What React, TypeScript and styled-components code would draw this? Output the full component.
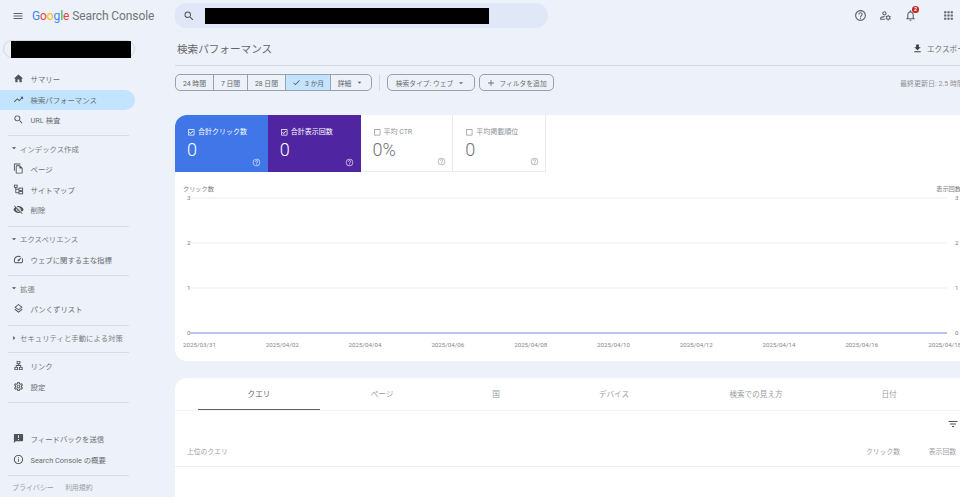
import React from "react";
import styled, { createGlobalStyle } from "styled-components";
import {
  MdAdd,
  MdAnnouncement,
  MdApps,
  MdArrowDropDown,
  MdArrowRight,
  MdCheck,
  MdCheckBoxOutlineBlank,
  MdFileDownload,
  MdFilterList,
  MdHelpOutline,
  MdHome,
  MdInfoOutline,
  MdMenu,
  MdNotificationsNone,
  MdOutlineCheckBox,
  MdOutlineFileCopy,
  MdOutlineLan,
  MdOutlineLayers,
  MdOutlineManageAccounts,
  MdOutlineSettings,
  MdOutlineSpeed,
  MdSearch,
  MdTrendingUp,
  MdVisibilityOff,
} from "react-icons/md";

const FONT = `Roboto, "Noto Sans CJK JP", sans-serif`;

const GlobalStyle = createGlobalStyle`
  html, body {
    margin: 0;
    padding: 0;
    height: 100%;
    overflow: hidden;
    background: #edf1f9;
    font-family: ${FONT};
    color: #5f6368;
  }
`;

const Page = styled.div`
  display: flex;
  width: 960px;
  height: 497px;
  overflow: hidden;
`;

/* sidebar */
const Sidebar = styled.aside`
  width: 175px;
  flex: none;
  display: flex;
  flex-direction: column;
`;

const LogoRow = styled.div`
  height: 32px;
  display: flex;
  align-items: center;
  padding-left: 12px;
  color: #5f6368;
`;

const Logo = styled.div`
  margin-left: 8px;
  font-size: 12px;
  white-space: nowrap;
  letter-spacing: -0.1px;
  color: #70757a;
`;

const Letter = styled.span<{ $c: string }>`
  color: ${(p) => p.$c};
`;

const PropertyPill = styled.div`
  margin: 8px 0 11px 3px;
  width: 132px;
  height: 18px;
  box-sizing: border-box;
  border: 1px solid #d5d8de;
  border-radius: 9px;
  padding-left: 7px;
  display: flex;
  align-items: center;
`;

const Redacted = styled.div<{ $w: number; $h: number }>`
  width: ${(p) => p.$w}px;
  height: ${(p) => p.$h}px;
  background: #000;
  flex: none;
`;

const NavRow = styled.div<{ $active?: boolean }>`
  height: 20.5px;
  width: 135px;
  display: flex;
  align-items: center;
  box-sizing: border-box;
  padding: 0 0 1px 13px;
  gap: 6.5px;
  font-size: 7.4px;
  color: #6a6e73;
  white-space: nowrap;
  border-radius: 0 11px 11px 0;
  background: ${(p) => (p.$active ? "#c2e4ff" : "transparent")};
  svg {
    width: 11px;
    height: 11px;
    flex: none;
    color: #50545a;
  }
`;

const SectionRow = styled.div`
  height: 20px;
  box-sizing: border-box;
  display: flex;
  align-items: center;
  padding: 0 0 2px 8.5px;
  font-size: 7.4px;
  color: #7a7e83;
  white-space: nowrap;
  svg {
    font-size: 10px;
    margin-right: 1.5px;
    color: #50545a;
    flex: none;
  }
`;

const NavDivider = styled.div<{ $before?: number; $after?: number }>`
  height: 1px;
  width: 121px;
  margin: ${(p) => p.$before ?? 4.5}px 0 ${(p) => p.$after ?? 3}px 8px;
  background: #d9dce2;
  flex: none;
`;

const Spacer = styled.div`
  flex: 1;
`;

const LegalRow = styled.div`
  display: flex;
  gap: 11px;
  padding-left: 12px;
  font-size: 7px;
  color: #9a9da2;
  height: 21px;
  align-items: center;
`;

/* main column */
const Main = styled.main`
  width: 785px;
  flex: none;
  overflow: hidden;
`;

const Header = styled.header`
  height: 32px;
  display: flex;
  align-items: flex-start;
`;

const SearchBar = styled.div`
  margin-top: 3px;
  margin-left: -1px;
  width: 374px;
  height: 25px;
  border-radius: 13px;
  background: #e0e8f8;
  display: flex;
  align-items: center;
  padding-left: 9px;
  box-sizing: border-box;
  gap: 10px;
  color: #50545a;
  svg {
    font-size: 12px;
    flex: none;
  }
`;

const HeaderIcons = styled.div`
  margin-left: auto;
  display: flex;
  align-items: center;
  height: 30px;
  color: #5f6368;
`;

const HeaderIcon = styled.div<{ $gap?: number }>`
  position: relative;
  width: 13px;
  height: 13px;
  margin-right: ${(p) => p.$gap ?? 12}px;
  svg {
    width: 13px;
    height: 13px;
    display: block;
  }
`;

const Badge = styled.span`
  position: absolute;
  top: -3px;
  right: -2px;
  width: 7px;
  height: 7px;
  border-radius: 50%;
  background: #c5221f;
  color: #fff;
  font-size: 5.5px;
  line-height: 7px;
  text-align: center;
  font-weight: 700;
`;

const TitleRow = styled.div`
  height: 33px;
  border-bottom: 1px solid #d6d9df;
  display: flex;
  align-items: center;
  justify-content: space-between;
`;

const Title = styled.h1`
  margin: 0 0 0 2px;
  font-size: 10.6px;
  font-weight: 400;
  color: #62666b;
`;

const ExportButton = styled.div`
  display: flex;
  align-items: center;
  gap: 4px;
  width: 48px;
  font-size: 7.6px;
  white-space: nowrap;
  color: #6a6e73;
  svg {
    font-size: 11px;
    flex: none;
    color: #3c4043;
  }
`;

const FilterBar = styled.div`
  height: 17px;
  margin-top: 8px;
  display: flex;
  align-items: center;
`;

const Segments = styled.div`
  display: flex;
  height: 17px;
  box-sizing: border-box;
  border: 1px solid #9aa0a6;
  border-radius: 5px;
  overflow: hidden;
`;

const Segment = styled.div<{ $w: number; $on?: boolean }>`
  width: ${(p) => p.$w}px;
  box-sizing: border-box;
  display: flex;
  align-items: center;
  justify-content: center;
  font-size: 6.8px;
  color: #5f6368;
  white-space: nowrap;
  gap: 4px;
  background: ${(p) => (p.$on ? "#c2e4ff" : "transparent")};
  & + & {
    border-left: 1px solid #9aa0a6;
  }
  svg {
    font-size: 9px;
    flex: none;
  }
`;

const BarDivider = styled.div`
  width: 1px;
  height: 17px;
  background: #d6d9df;
  margin: 0 7px;
`;

const Chip = styled.div<{ $w: number }>`
  width: ${(p) => p.$w}px;
  height: 17px;
  box-sizing: border-box;
  border: 1px solid #9aa0a6;
  border-radius: 5px;
  margin-right: 4px;
  display: flex;
  align-items: center;
  justify-content: center;
  gap: 3px;
  font-size: 6.8px;
  color: #6a6e73;
  white-space: nowrap;
  svg {
    font-size: 10px;
    flex: none;
  }
`;

const Updated = styled.div`
  margin-left: auto;
  width: 60px;
  overflow: hidden;
  font-size: 7px;
  white-space: nowrap;
  color: #8f9297;
`;

const Card = styled.section<{ $top: number }>`
  width: 800px;
  margin-top: ${(p) => p.$top}px;
  background: #fff;
  border-radius: 12px;
  overflow: hidden;
`;

const Metrics = styled.div`
  display: flex;
`;

const Metric = styled.div<{ $bg?: string }>`
  position: relative;
  width: 92.75px;
  height: 57px;
  box-sizing: border-box;
  padding: 12px 0 0 12px;
  background: ${(p) => p.$bg ?? "#fff"};
  color: ${(p) => (p.$bg ? "#fff" : "#8f9297")};
  border-right: ${(p) => (p.$bg ? "none" : "1px solid #e8eaed")};
  border-bottom: ${(p) => (p.$bg ? "none" : "1px solid #e8eaed")};
`;

const MetricLabel = styled.div`
  display: flex;
  align-items: center;
  gap: 2.5px;
  font-size: 7px;
  line-height: 10px;
  white-space: nowrap;
  svg {
    font-size: 8.5px;
    flex: none;
  }
`;

const MetricValue = styled.div<{ $dark: boolean }>`
  font-size: 18px;
  line-height: 22px;
  margin-top: 2px;
  font-weight: 300;
  color: ${(p) => (p.$dark ? "#fff" : "#6f7378")};
`;

const MetricHelp = styled.span`
  position: absolute;
  right: 6.5px;
  bottom: 5.5px;
  font-size: 9px;
  line-height: 0;
  opacity: 0.75;
  color: inherit;
`;

const ChartSvg = styled.svg`
  display: block;
  width: 800px;
  height: 189px;
  font-family: ${FONT};
`;

const Tabs = styled.div`
  display: flex;
  height: 33px;
  box-sizing: border-box;
  padding-left: 23px;
  border-bottom: 1.5px solid #f1f3f4;
`;

const Tab = styled.div<{ $w: number; $on?: boolean }>`
  width: ${(p) => p.$w}px;
  box-sizing: border-box;
  display: flex;
  align-items: center;
  justify-content: center;
  padding-bottom: 1px;
  font-size: 7.6px;
  color: ${(p) => (p.$on ? "#5f6368" : "#9a9da2")};
  border-bottom: ${(p) => (p.$on ? "1.5px solid #5f6368" : "none")};
`;

const TableTools = styled.div`
  height: 25px;
  width: 785px;
  display: flex;
  align-items: center;
  justify-content: flex-end;
  color: #50545a;
  svg {
    font-size: 12px;
    margin-right: 1px;
  }
`;

const TableHead = styled.div`
  height: 30px;
  display: flex;
  align-items: center;
  padding-left: 12px;
  font-size: 6.8px;
  color: #9a9da2;
  border-bottom: 1px solid #eceef1;
`;

const HeadCell = styled.div<{ $w: number; $first?: boolean }>`
  width: ${(p) => p.$w}px;
  text-align: right;
  margin-left: ${(p) => (p.$first ? "auto" : "0")};
  white-space: nowrap;
`;

const TableEnd = styled.div`
  width: 19px;
`;

const TableBody = styled.div`
  height: 60px;
`;

const yTicks = [
  { v: "3", y: 26 },
  { v: "2", y: 71 },
  { v: "1", y: 116 },
  { v: "0", y: 161 },
];
const dates = [
  "2025/03/31",
  "2025/04/02",
  "2025/04/04",
  "2025/04/06",
  "2025/04/08",
  "2025/04/10",
  "2025/04/12",
  "2025/04/14",
  "2025/04/16",
  "2025/04/18",
];

const SitemapIcon = () => (
  <svg viewBox="0 0 24 24" fill="none" stroke="currentColor" strokeWidth="2">
    <rect x="3" y="2.5" width="6" height="5" />
    <rect x="13" y="9" width="8" height="5" />
    <rect x="13" y="16.5" width="8" height="5" />
    <path d="M6 7.5V19h7M6 11.5h7" />
  </svg>
);

const Chart = () => (
  <ChartSvg viewBox="0 0 800 189">
    <text x="8" y="19" fontSize="6.2" fill="#7c8085">
      クリック数
    </text>
    <text x="786" y="19" fontSize="6.2" fill="#7c8085" textAnchor="end">
      表示回数
    </text>
    {yTicks.map((t) => (
      <g key={t.v}>
        <text x="12" y={t.y + 2.2} fontSize="6.2" fill="#7c8085">
          {t.v}
        </text>
        <line x1="15" x2="772" y1={t.y} y2={t.y} stroke="#eceef1" strokeWidth="1" />
        <text x="780" y={t.y + 2.2} fontSize="6.2" fill="#7c8085">
          {t.v}
        </text>
      </g>
    ))}
    <line x1="15" x2="772" y1="161" y2="161" stroke="#7d92e2" strokeWidth="1" />
    {dates.map((d, i) => (
      <text key={d} x={8 + i * 82.8} y="175" fontSize="6.2" fill="#85898e">
        {d}
      </text>
    ))}
  </ChartSvg>
);

export default function App() {
  return (
    <Page>
      <GlobalStyle />
      <Sidebar>
        <LogoRow>
          <MdMenu size={12} />
          <Logo>
            <Letter $c="#4285f4">G</Letter>
            <Letter $c="#ea4335">o</Letter>
            <Letter $c="#fbbc05">o</Letter>
            <Letter $c="#4285f4">g</Letter>
            <Letter $c="#34a853">l</Letter>
            <Letter $c="#ea4335">e</Letter> Search Console
          </Logo>
        </LogoRow>
        <PropertyPill>
          <Redacted $w={120} $h={17} />
        </PropertyPill>
        <NavRow>
          <MdHome />
          サマリー
        </NavRow>
        <NavRow $active>
          <MdTrendingUp />
          検索パフォーマンス
        </NavRow>
        <NavRow>
          <MdSearch />
          URL 検査
        </NavRow>
        <NavDivider />
        <SectionRow>
          <MdArrowDropDown />
          インデックス作成
        </SectionRow>
        <NavRow>
          <MdOutlineFileCopy />
          ページ
        </NavRow>
        <NavRow>
          <SitemapIcon />
          サイトマップ
        </NavRow>
        <NavRow>
          <MdVisibilityOff />
          削除
        </NavRow>
        <NavDivider $before={5} $after={3} />
        <SectionRow>
          <MdArrowDropDown />
          エクスペリエンス
        </SectionRow>
        <NavRow>
          <MdOutlineSpeed />
          ウェブに関する主な指標
        </NavRow>
        <NavDivider $before={5} $after={3} />
        <SectionRow>
          <MdArrowDropDown />
          拡張
        </SectionRow>
        <NavRow>
          <MdOutlineLayers />
          パンくずリスト
        </NavRow>
        <NavDivider $before={5} $after={3} />
        <SectionRow>
          <MdArrowRight />
          セキュリティと手動による対策
        </SectionRow>
        <NavDivider $before={3.5} $after={3} />
        <NavRow>
          <MdOutlineLan />
          リンク
        </NavRow>
        <NavRow>
          <MdOutlineSettings />
          設定
        </NavRow>
        <NavDivider />
        <Spacer />
        <NavRow>
          <MdAnnouncement />
          フィードバックを送信
        </NavRow>
        <NavRow>
          <MdInfoOutline />
          Search Console の概要
        </NavRow>
        <NavDivider $before={5} $after={0} />
        <LegalRow>
          <span>プライバシー</span>
          <span>利用規約</span>
        </LegalRow>
      </Sidebar>
      <Main>
        <Header>
          <SearchBar>
            <MdSearch />
            <Redacted $w={284} $h={16} />
          </SearchBar>
          <HeaderIcons>
            <HeaderIcon>
              <MdHelpOutline />
            </HeaderIcon>
            <HeaderIcon>
              <MdOutlineManageAccounts />
            </HeaderIcon>
            <HeaderIcon $gap={25}>
              <MdNotificationsNone />
              <Badge>2</Badge>
            </HeaderIcon>
            <HeaderIcon $gap={5}>
              <MdApps />
            </HeaderIcon>
          </HeaderIcons>
        </Header>
        <TitleRow>
          <Title>検索パフォーマンス</Title>
          <ExportButton>
            <MdFileDownload />
            エクスポート
          </ExportButton>
        </TitleRow>
        <FilterBar>
          <Segments>
            <Segment $w={37}>24 時間</Segment>
            <Segment $w={34}>7 日間</Segment>
            <Segment $w={38}>28 日間</Segment>
            <Segment $w={45} $on>
              <MdCheck />3 か月
            </Segment>
            <Segment $w={41}>
              詳細
              <MdArrowDropDown />
            </Segment>
          </Segments>
          <BarDivider />
          <Chip $w={88}>
            検索タイプ: ウェブ
            <MdArrowDropDown />
          </Chip>
          <Chip $w={75}>
            <MdAdd />
            フィルタを追加
          </Chip>
          <Updated>最終更新日: 2.5 時間前</Updated>
        </FilterBar>
        <Card $top={24}>
          <Metrics>
            <Metric $bg="#4076e8">
              <MetricLabel>
                <MdOutlineCheckBox />
                合計クリック数
              </MetricLabel>
              <MetricValue $dark>0</MetricValue>
              <MetricHelp>
                <MdHelpOutline />
              </MetricHelp>
            </Metric>
            <Metric $bg="#5025a2">
              <MetricLabel>
                <MdOutlineCheckBox />
                合計表示回数
              </MetricLabel>
              <MetricValue $dark>0</MetricValue>
              <MetricHelp>
                <MdHelpOutline />
              </MetricHelp>
            </Metric>
            <Metric>
              <MetricLabel>
                <MdCheckBoxOutlineBlank />
                平均 CTR
              </MetricLabel>
              <MetricValue $dark={false}>0%</MetricValue>
              <MetricHelp>
                <MdHelpOutline />
              </MetricHelp>
            </Metric>
            <Metric>
              <MetricLabel>
                <MdCheckBoxOutlineBlank />
                平均掲載順位
              </MetricLabel>
              <MetricValue $dark={false}>0</MetricValue>
              <MetricHelp>
                <MdHelpOutline />
              </MetricHelp>
            </Metric>
          </Metrics>
          <Chart />
        </Card>
        <Card $top={17}>
          <Tabs>
            <Tab $w={122} $on>
              クエリ
            </Tab>
            <Tab $w={124}>ページ</Tab>
            <Tab $w={104}>国</Tab>
            <Tab $w={132}>デバイス</Tab>
            <Tab $w={152}>検索での見え方</Tab>
            <Tab $w={114}>日付</Tab>
          </Tabs>
          <TableTools>
            <MdFilterList />
          </TableTools>
          <TableHead>
            上位のクエリ
            <HeadCell $w={40} $first>
              クリック数
            </HeadCell>
            <HeadCell $w={56}>表示回数</HeadCell>
            <TableEnd />
          </TableHead>
          <TableBody />
        </Card>
      </Main>
    </Page>
  );
}
